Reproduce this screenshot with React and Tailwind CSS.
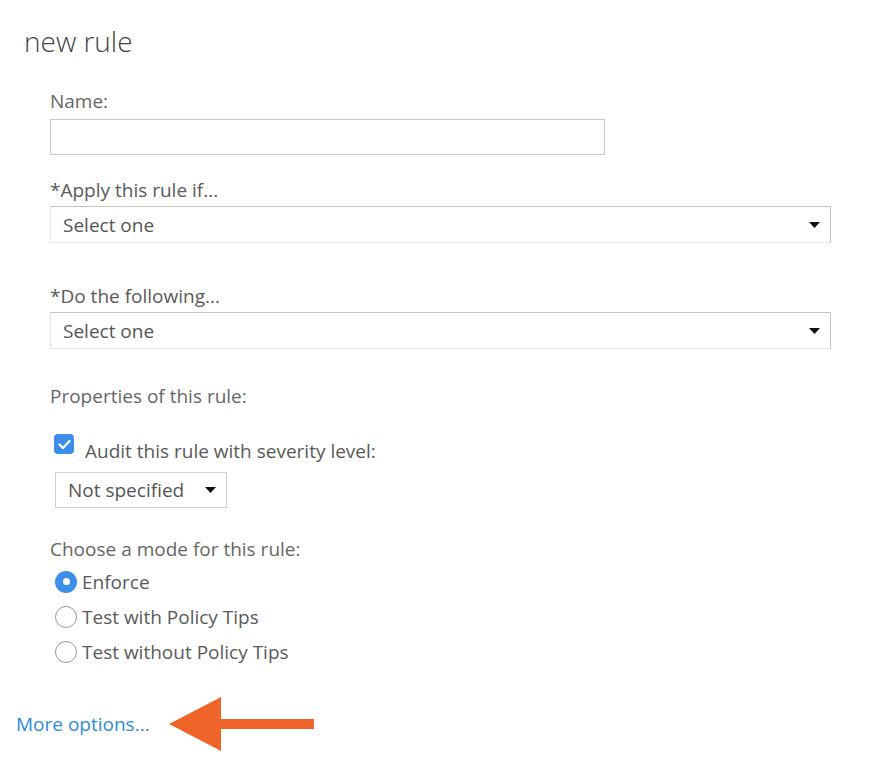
import { useState } from 'react';

function Caret() {
  return (
    <svg width="11" height="6" viewBox="0 0 11 6" className="shrink-0">
      <path d="M0 0 L11 0 L5.5 6 Z" fill="#111" />
    </svg>
  );
}

function Radio({ checked, label, onClick }) {
  return (
    <div className="flex items-center h-[35px] cursor-pointer" onClick={onClick}>
      {checked ? (
        <span className="w-[22px] h-[22px] rounded-full bg-[#3d8ee8] flex items-center justify-center mr-[5px]">
          <span className="w-[7px] h-[7px] rounded-full bg-white" />
        </span>
      ) : (
        <span className="w-[22px] h-[22px] rounded-full border border-[#9a9a9a] bg-white mr-[5px]" />
      )}
      <span className="text-[#5a5a5a]">{label}</span>
    </div>
  );
}

export default function App() {
  const [mode, setMode] = useState('enforce');
  const [audit, setAudit] = useState(true);

  return (
    <div
      className="min-h-screen bg-white text-[19px] leading-[22px] text-[#666]"
      style={{ fontFamily: '"Open Sans", "Noto Sans", sans-serif' }}
    >
      <h1 className="pl-[24px] pt-[24px] text-[28px] font-light text-[#444] leading-[34px]">new rule</h1>

      <div className="pl-[50px] pt-[32px]">
        <label className="block mb-[7px]">Name:</label>
        <input
          type="text"
          className="block w-[555px] h-[36px] border border-[#c8c8c8] outline-none px-2"
        />

        <label className="block mt-[24px] mb-[5px] text-[#5a5a5a]">*Apply this rule if...</label>
        <div className="w-[781px] h-[37px] border border-[#c4c4c4] border-b-[#e4e8ee] border-l-[#e4e8ee] flex items-center justify-between pl-[12px] pr-[10px] text-[#555]">
          <span>Select one</span>
          <Caret />
        </div>

        <label className="block mt-[42px] mb-[5px] text-[#5a5a5a]">*Do the following...</label>
        <div className="w-[781px] h-[37px] border border-[#c4c4c4] border-b-[#e4e8ee] border-l-[#e4e8ee] flex items-center justify-between pl-[12px] pr-[10px] text-[#555]">
          <span>Select one</span>
          <Caret />
        </div>

        <div className="mt-[36px]">Properties of this rule:</div>

        <div className="flex items-start mt-[27px] ml-[4px] cursor-pointer" onClick={() => setAudit(!audit)}>
          <span
            className={
              audit
                ? 'w-[20px] h-[20px] rounded-[4px] bg-[#3d8ee8] flex items-center justify-center'
                : 'w-[20px] h-[20px] rounded-[4px] border border-[#999] bg-white'
            }
          >
            {audit && (
              <svg width="13" height="11" viewBox="0 0 13 11">
                <path d="M1.5 5.5 L5 9 L11.5 2" stroke="white" strokeWidth="2.2" fill="none" strokeLinecap="round" strokeLinejoin="round" />
              </svg>
            )}
          </span>
          <span className="ml-[11px] mt-[6px] text-[#5a5a5a]">Audit this rule with severity level:</span>
        </div>

        <div className="mt-[10px] ml-[5px] w-[172px] h-[36px] border border-[#d0d0d0] flex items-center justify-between pl-[12px] pr-[10px] text-[#555]">
          <span>Not specified</span>
          <Caret />
        </div>

        <div className="mt-[30px]">Choose a mode for this rule:</div>
        <div className="ml-[5px] mt-[4px]">
          <Radio checked={mode === 'enforce'} label="Enforce" onClick={() => setMode('enforce')} />
          <Radio checked={mode === 'with'} label="Test with Policy Tips" onClick={() => setMode('with')} />
          <Radio checked={mode === 'without'} label="Test without Policy Tips" onClick={() => setMode('without')} />
        </div>
      </div>

      <div className="flex items-center pl-[16px] mt-[28px]">
        <a href="#" className="text-[#2e8bd6]">More options...</a>
        <svg width="146" height="54" viewBox="0 0 146 54" className="ml-[19px]">
          <path d="M0 27 L52 0 L52 22 L145 22 L145 32 L52 32 L52 54 Z" fill="#ef6429" />
        </svg>
      </div>
    </div>
  );
}
